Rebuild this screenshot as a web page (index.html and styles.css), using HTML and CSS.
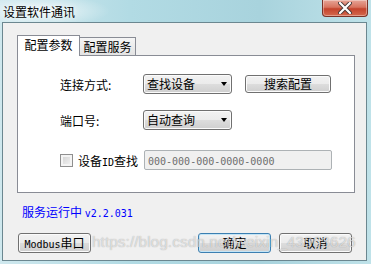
FILE: index.html
```html
<!DOCTYPE html>
<html lang="zh-CN">

<head>
    <meta charset="UTF-8">
    <title>设置软件通讯</title>
    <link rel="stylesheet" href="styles.css">
</head>

<body>
    <div class="window">
        <div class="titlebar">
            <span class="title">设置软件通讯</span>
            <div class="close">
                <svg width="14" height="12" viewBox="0 0 14 12">
                    <path d="M2 1 L12 11 M12 1 L2 11" stroke="#4a3a38" stroke-width="4" stroke-linecap="round"/>
                    <path d="M2 1 L12 11 M12 1 L2 11" stroke="#ffffff" stroke-width="2.2" stroke-linecap="round"/>
                </svg>
            </div>
        </div>

        <div class="client">
            <div class="tabs">
                <div class="tab active">配置参数</div>
                <div class="tab">配置服务</div>
            </div>

            <div class="panel">
                <div class="row">
                    <span class="label">连接方式:</span>
                    <div class="combo"><span>查找设备</span><i class="arrow"></i></div>
                    <button class="btn search">搜索配置</button>
                </div>
                <div class="row row2">
                    <span class="label">端口号:</span>
                    <div class="combo"><span>自动查询</span><i class="arrow"></i></div>
                </div>
                <div class="row row3">
                    <span class="check"></span>
                    <span class="check-label">设备<span class="mono">ID</span>查找</span>
                    <div class="field"><span class="mono">000-000-000-0000-0000</span></div>
                </div>
            </div>

            <div class="status">服务运行中 <span class="mono">v2.2.031</span></div>

            <div class="actions">
                <button class="btn modbus"><span class="mono">Modbus</span>串口</button>
                <button class="btn default">确定</button>
                <button class="btn cancel">取消</button>
            </div>
        </div>

        <div class="watermark">https://blog.csdn.net/weixin_43963626</div>
    </div>
</body>

</html>
```

FILE: styles.css
```css
body {
    margin: 0;
    font-family: "Noto Sans CJK SC", sans-serif;
    font-size: 12px;
    color: #000;
}
.window {
    position: relative;
    width: 371px;
    height: 264px;
    display: flex;
    flex-direction: column;
    background: linear-gradient(to right, #cfe8ee 0%, #b2dbe4 35%, #a8d3dd 70%, #bfe2e9 100%);
    overflow: hidden;
}
.titlebar {
    height: 24px;
    display: flex;
    justify-content: space-between;
    align-items: flex-start;
    background: radial-gradient(ellipse 70px 16px at 40px 11px, rgba(255,255,255,0.75), rgba(255,255,255,0));
}
.title {
    margin: 3px 0 0 3px;
    line-height: 17px;
    text-shadow: 0 0 6px #fff;
}
.close {
    width: 44px;
    height: 16px;
    margin-right: 3px;
    display: flex;
    align-items: center;
    justify-content: center;
    border: 1px solid #7a3328;
    border-top: none;
    border-radius: 0 0 4px 4px;
    background: linear-gradient(#e6a597 0%, #d8745f 45%, #c4432c 55%, #d46a4e 100%);
    box-shadow: inset 0 0 0 1px rgba(255,255,255,0.35);
}
.client {
    flex: 1;
    margin: 0 4px 3px 2px;
    border: 1px solid #6b8790;
    background-color: #f0f0f0;
    padding: 12px 11px 7px 14px;
    display: flex;
    flex-direction: column;
}
.tabs {
    display: flex;
    align-items: flex-end;
    height: 20px;
}
.tab {
    box-sizing: border-box;
    height: 18px;
    width: 57px;
    border: 1px solid #898c95;
    border-bottom: none;
    background: linear-gradient(#f5f5f5, #e3e3e3);
    text-align: center;
    line-height: 17px;
}
.tab.active {
    position: relative;
    z-index: 1;
    width: 63px;
    height: 21px;
    margin-bottom: -1px;
    margin-right: -1px;
    background: #fff;
    line-height: 17px;
}
.panel {
    box-sizing: border-box;
    height: 138px;
    border: 1px solid #898c95;
    background: #fff;
    padding: 18px 0 0 42px;
}
.row {
    display: flex;
    align-items: center;
    height: 20px;
}
.row2 {
    margin-top: 16px;
}
.row3 {
    margin-top: 20px;
}
.label {
    width: 83px;
}
.combo {
    position: relative;
    box-sizing: border-box;
    width: 89px;
    height: 20px;
    padding-left: 3px;
    line-height: 18px;
    border: 1px solid #707070;
    border-radius: 3px;
    background: linear-gradient(#f2f2f2 0%, #ebebeb 50%, #dddddd 50%, #cfcfcf 100%);
    box-shadow: inset 0 0 0 1px #fbfbfb;
}
.arrow {
    position: absolute;
    right: 4px;
    top: 7px;
    width: 0;
    height: 0;
    border-left: 3.5px solid transparent;
    border-right: 3.5px solid transparent;
    border-top: 4px solid #000;
}
.btn {
    box-sizing: border-box;
    height: 20px;
    width: 73px;
    padding: 0;
    font-family: "Noto Sans CJK SC", sans-serif;
    font-size: 12px;
    line-height: 18px;
    color: #000;
    border: 1px solid #707070;
    border-radius: 3px;
    background: linear-gradient(#f2f2f2 0%, #ebebeb 50%, #dddddd 50%, #cfcfcf 100%);
    box-shadow: inset 0 0 0 1px #fbfbfb;
}
.search {
    width: 86px;
    height: 18px;
    line-height: 16px;
    margin-left: 13px;
}
.check {
    box-sizing: border-box;
    width: 13px;
    height: 13px;
    border: 1px solid #8f8f8f;
    background: linear-gradient(135deg, #cfcfcf, #f6f6f6);
    box-shadow: inset 0 0 0 2px #f4f4f4;
}
.check-label {
    width: 66px;
    margin-left: 5px;
}
.field {
    box-sizing: border-box;
    width: 188px;
    height: 20px;
    padding-left: 3px;
    line-height: 18px;
    border: 1px solid #adb2b5;
    border-radius: 2px;
    background: #f0f0f0;
    color: #6d6d6d;
}
.mono {
    font-family: "DejaVu Sans Mono", monospace;
    font-size: 10px;
}
.status {
    margin: 11px 0 0 5px;
    line-height: 16px;
    color: #0000ff;
}
.actions {
    display: flex;
    margin-top: 11px;
}
.modbus {
    margin-left: 1px;
}
.default {
    margin-left: auto;
    border-color: #3c7fb1;
    box-shadow: inset 0 0 0 1px #c4e5f6;
}
.cancel {
    margin-left: 8px;
    margin-right: 3px;
}
.watermark {
    position: absolute;
    left: 92px;
    top: 233px;
    font-family: "Liberation Sans", sans-serif;
    font-size: 15.5px;
    line-height: 18px;
    color: rgba(255,255,255,0.6);
    text-shadow: 0 0 1px rgba(0,0,0,0.35);
    white-space: nowrap;
    pointer-events: none;
}
```
